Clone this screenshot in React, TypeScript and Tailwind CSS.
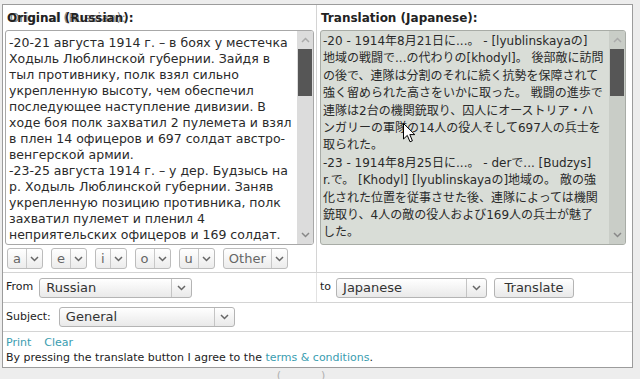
import React from 'react';

const ruLines = [
  '-20-21 августа 1914 г. – в боях у местечка',
  'Ходыль Люблинской губернии. Зайдя в',
  'тыл противнику, полк взял сильно',
  'укрепленную высоту, чем обеспечил',
  'последующее наступление дивизии. В',
  'ходе боя полк захватил 2 пулемета и взял',
  'в плен 14 офицеров и 697 солдат австро-',
  'венгерской армии.',
  '-23-25 августа 1914 г. – у дер. Будзысь на',
  'р. Ходыль Люблинской губернии. Заняв',
  'укрепленную позицию противника, полк',
  'захватил пулемет и пленил 4',
  'неприятельских офицеров и 169 солдат.',
];

const jaLines = [
  '-20 - 1914年8月21日に...。 - [lyublinskayaの]',
  '地域の戦闘で...の代わりの[khodyl]。 後部敵に訪問',
  'の後で、連隊は分割のそれに続く抗勢を保障されて',
  '強く留められた高さをいかに取った。 戦闘の進歩で',
  '連隊は2台の機関銃取り、囚人にオーストリア・ハ',
  'ンガリーの軍隊の14人の役人そして697人の兵士を',
  '取られた。',
  '-23 - 1914年8月25日に...。 - derで... [Budzys]',
  'r.で。 [Khodyl] [lyublinskayaの]地域の。 敵の強',
  '化された位置を従事させた後、連隊によっては機関',
  '銃取り、4人の敵の役人および169人の兵士が魅了',
  'した。',
];

const vowels = ['a', 'e', 'i', 'o', 'u', 'Other'];

const Chevron = ({ up = false, color = '#666' }: { up?: boolean; color?: string }) => (
  <svg width="9" height="6" viewBox="0 0 9 6">
    <path d={up ? 'M1 5 L4.5 1.5 L8 5' : 'M1 1 L4.5 4.5 L8 1'} fill="none" stroke={color} strokeWidth="1.5" />
  </svg>
);

const Scrollbar = ({ track }: { track: string }) => (
  <div className={`flex flex-col w-[16px] h-full ${track}`}>
    <div className="h-[18px] flex items-center justify-center">
      <Chevron up color="#aaa" />
    </div>
    <div className="h-[47px] bg-[#565656] mx-[1px]" />
    <div className="flex-1" />
    <div className="h-[18px] flex items-center justify-center">
      <Chevron color="#888" />
    </div>
  </div>
);

const Select = ({ label, width }: { label: string; width: string }) => (
  <div className={`flex items-stretch h-[20px] ${width} border border-[#b4b4b4] rounded-[3px] bg-gradient-to-b from-white to-[#e9e9e9] text-[13px] text-[#333]`}>
    <div className="flex-1 flex items-center pl-[6px]">{label}</div>
    <div className="w-[20px] border-l border-[#c4c4c4] flex items-center justify-center">
      <Chevron />
    </div>
  </div>
);

export default function App() {
  return (
    <div className="w-[640px] h-[379px] overflow-hidden bg-[#ededed] pt-[4px] pl-[2px] font-['DejaVu_Sans','Noto_Sans_CJK_JP',sans-serif] text-[#222]">
      <div className="w-[631px] h-[364px] border border-[#9c9c9c] bg-white flex flex-col">
        {/* text areas */}
        <div className="flex h-[267px]">
          <div className="w-[314px] border-r border-[#d4d4d4] flex flex-col">
            <div className="h-[25px] flex items-center pl-[4px] text-[12px] font-bold relative">
              <span>Original (Russian):</span>
              <span className="absolute left-[7px] inset-y-0 flex items-center font-normal tracking-[0.3px] opacity-60">Original (Russian):</span>
            </div>
            <div className="ml-[2px] w-[309px] h-[215px] border border-[#a8a8a8] rounded-[3px] bg-white flex overflow-hidden">
              <div className="flex-1 pl-[3px] pt-[4px] text-[12.5px] leading-[16px] text-[#2a2a2a] overflow-hidden">
                {ruLines.map((l, i) => (
                  <div key={i} className="whitespace-nowrap">{l}</div>
                ))}
              </div>
              <Scrollbar track="bg-[#dcdcdc]" />
            </div>
            <div className="flex items-center h-[21px] mt-[3px] pl-[4px] gap-[8px]">
              {vowels.map((v) => (
                <div key={v} className="flex items-stretch h-[21px] border border-[#bcbcbc] rounded-[3px] bg-gradient-to-b from-white to-[#ececec] text-[13px] text-[#666]">
                  <div className="flex items-center justify-center px-[5px]">{v}</div>
                  <div className="w-[16px] border-l border-[#c8c8c8] flex items-center justify-center">
                    <Chevron />
                  </div>
                </div>
              ))}
            </div>
          </div>
          <div className="flex-1 flex flex-col">
            <div className="h-[25px] flex items-center pl-[4px] text-[12px] font-bold">Translation (Japanese):</div>
            <div className="ml-[3px] w-[306px] h-[215px] border border-[#a8aca6] rounded-[3px] bg-[#d9ddd7] flex overflow-hidden relative">
              <div className="flex-1 pl-[2px] pt-[2px] text-[12px] leading-[17.4px] text-[#2a2a2a] overflow-hidden">
                {jaLines.map((l, i) => (
                  <div key={i} className="whitespace-nowrap">{l}</div>
                ))}
              </div>
              <Scrollbar track="bg-[#c9cdc7]" />
              {/* mouse cursor */}
              <svg className="absolute left-[82px] top-[92px]" width="13" height="20" viewBox="0 0 13 20">
                <path d="M0.5 0.5 L0.5 16 L4.3 12.4 L7 18.8 L9.4 17.8 L6.8 11.6 L11.8 11.6 Z" fill="white" stroke="black" strokeWidth="1" />
              </svg>
            </div>
          </div>
        </div>

        {/* from / to */}
        <div className="flex h-[30px] border-t border-[#d4d4d4]">
          <div className="w-[314px] border-r border-[#e2e2e2] flex items-center pl-[3px] gap-[6px] text-[11px]">
            <span>From</span>
            <Select label="Russian" width="w-[153px]" />
          </div>
          <div className="flex-1 flex items-center pl-[3px] gap-[5px] text-[11px]">
            <span>to</span>
            <Select label="Japanese" width="w-[151px]" />
            <div className="ml-[2px] h-[20px] w-[80px] border border-[#b4b4b4] rounded-[3px] bg-gradient-to-b from-white to-[#e9e9e9] text-[13px] text-[#333] flex items-center justify-center">
              Translate
            </div>
          </div>
        </div>

        {/* subject */}
        <div className="flex items-center h-[29px] border-t border-[#d4d4d4] pl-[3px] gap-[8px] text-[11px]">
          <span>Subject:</span>
          <Select label="General" width="w-[176px]" />
        </div>

        {/* footer */}
        <div className="flex-1 border-t border-[#d4d4d4] pl-[3px] pt-[3px] text-[11px] leading-[15px]">
          <div className="flex gap-[13px] text-[#3a9db0]">
            <span>Print</span>
            <span>Clear</span>
          </div>
          <div>
            By pressing the translate button I agree to the <span className="text-[#3a9db0]">terms &amp; conditions</span>.
          </div>
        </div>
      </div>
      <div className="flex justify-center pr-[40px] pt-[1px] text-[11px] text-[#b0b0b0] leading-[14px] gap-[40px]">
        <span>(</span>
        <span>)</span>
      </div>
    </div>
  );
}
